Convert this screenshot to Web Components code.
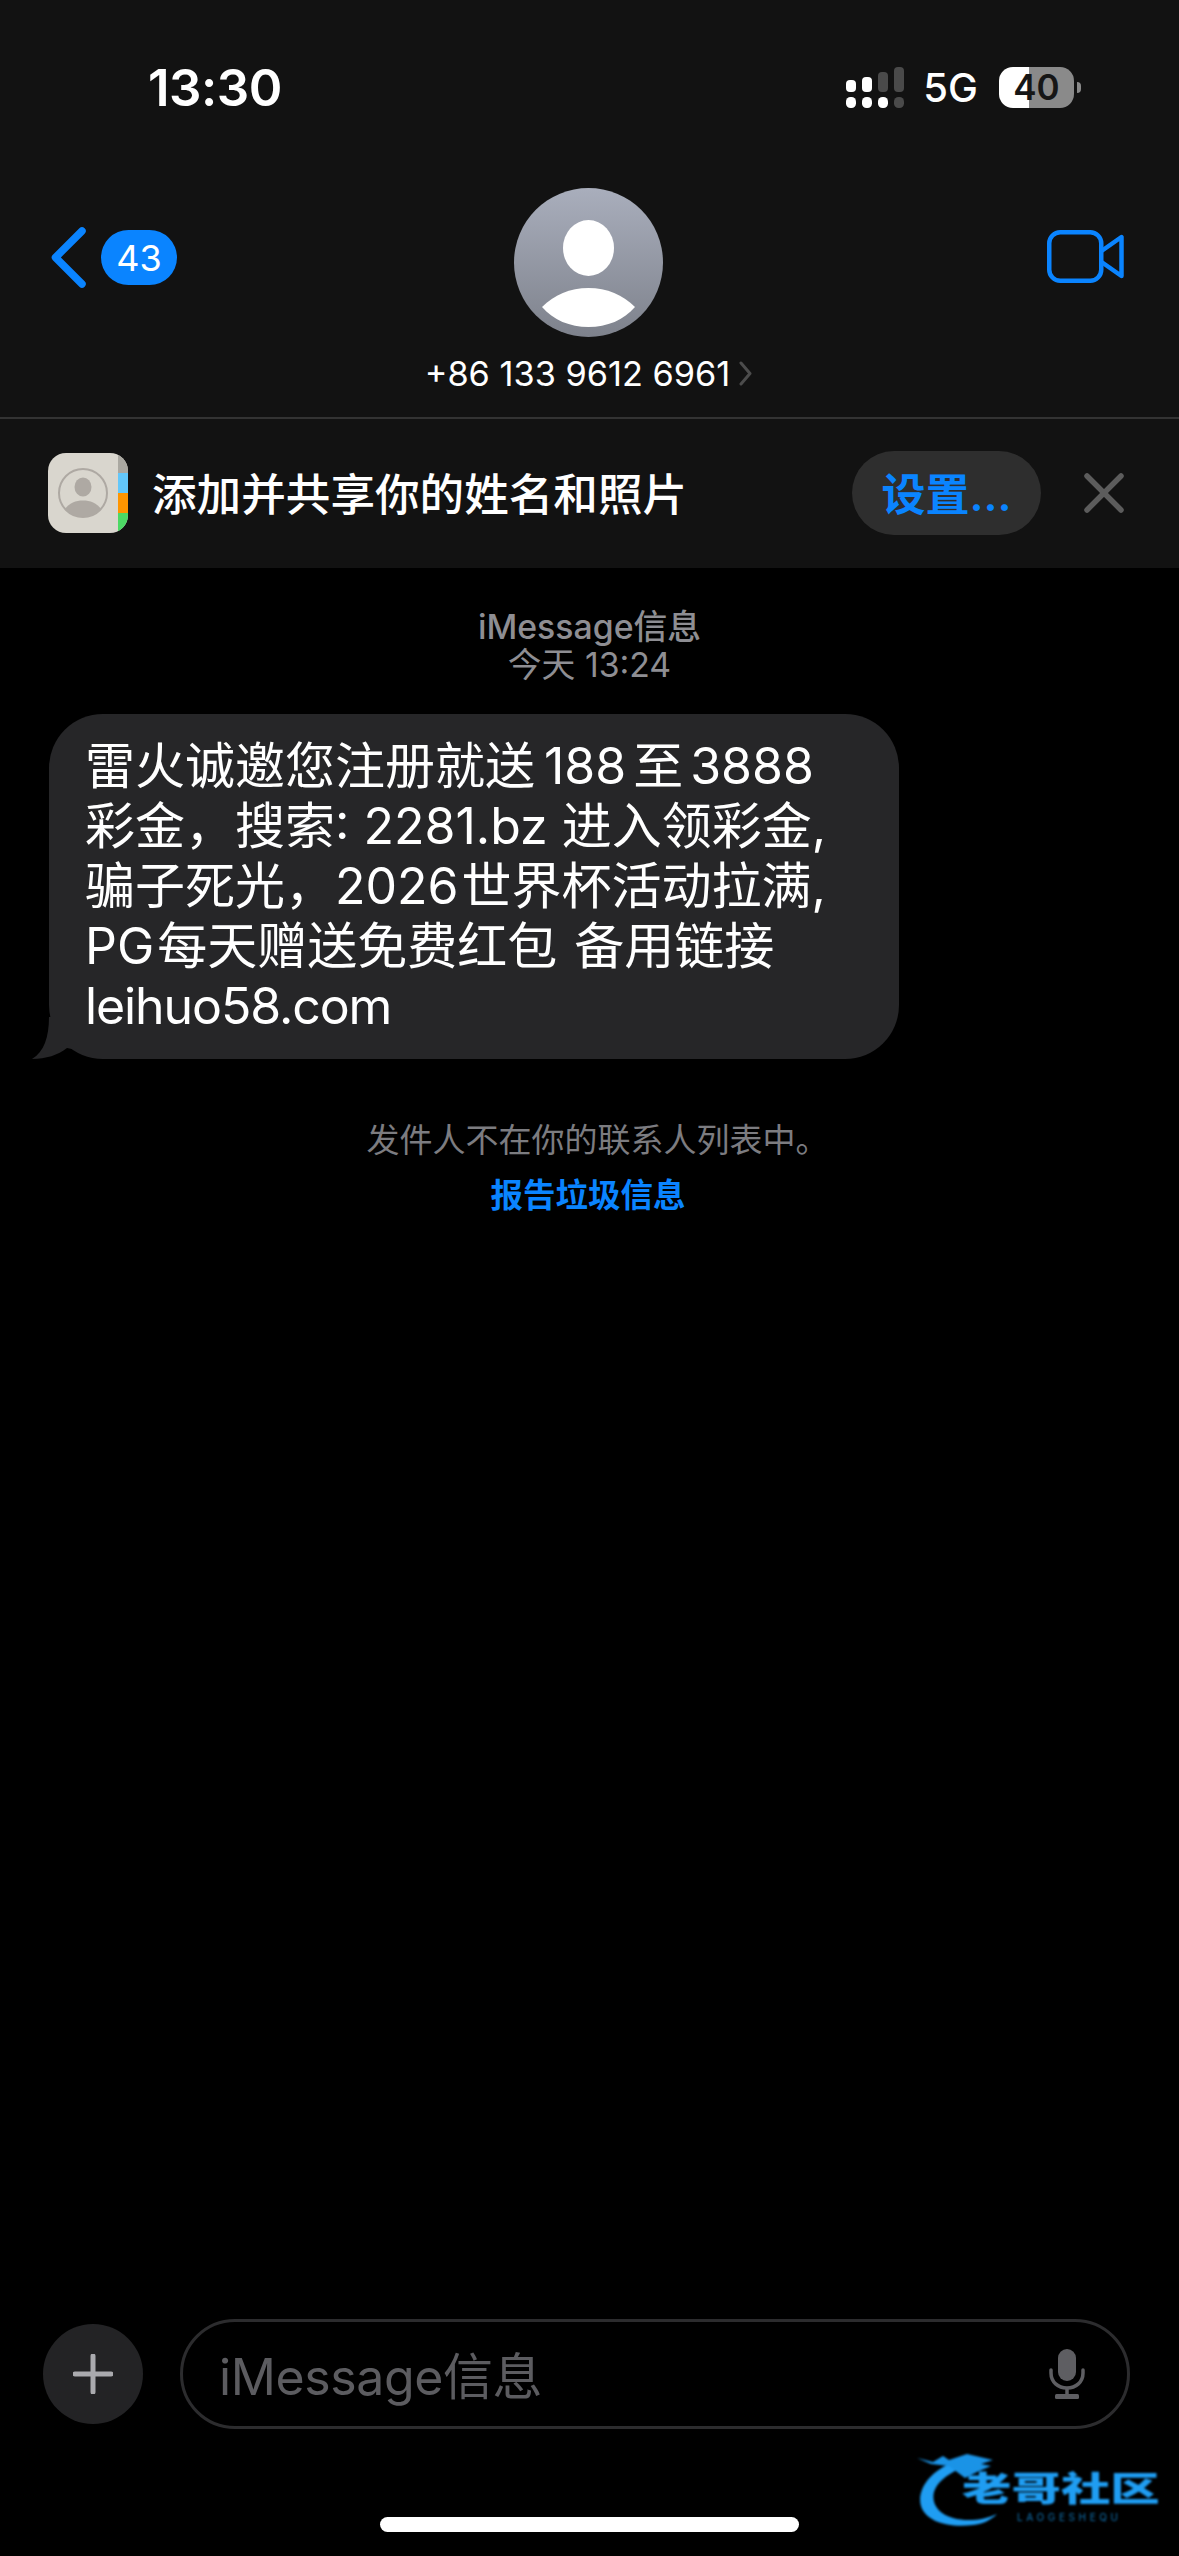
<!DOCTYPE html>
<html lang="zh-CN">
<head>
<meta charset="utf-8">
<title>iMessage</title>
<style>
  html, body { margin: 0; background: #000; }
  body {
    width: 1179px;
    height: 2556px;
    overflow: hidden;
    position: relative;
    display: flex;
    flex-direction: column;
    color: #fff;
    font-family: Inter, "Noto Sans CJK SC", sans-serif;
  }
  msg-thread { flex: 1; }
  msg-bubble i { display: inline-block; width: 7px; }
  msg-bubble i.wide { width: 9px; }
  msg-bubble i.thin { width: 3px; }
  msg-bubble span { letter-spacing: -1.1px; }
</style>
</head>
<body>
  <status-bar time="13:30" network="5G" battery="40"></status-bar>
  <chat-header badge="43" phone="+86 133 9612 6961"></chat-header>
  <share-banner>添加并共享你的姓名和照片</share-banner>
  <msg-thread>
    <msg-bubble slot="bubble">雷火诚邀您注册就送<i class="wide"></i>188<i></i>至<i></i>3888<br>彩金，搜索: 2281.bz 进入领彩金,<br>骗子死光，2026<i class="thin"></i>世界杯活动拉满,<br>PG<i class="thin"></i>每天赠送免费红包<i class="thin"></i> 备用链接<br><span>leihuo58.com</span></msg-bubble>
  </msg-thread>
  <msg-composer placeholder="iMessage信息"></msg-composer>
  <home-bar></home-bar>
  <water-mark></water-mark>

<script>
  class StatusBar extends HTMLElement {
    connectedCallback() {
      const time = this.getAttribute('time');
      const network = this.getAttribute('network');
      const battery = this.getAttribute('battery');
      this.attachShadow({ mode: 'open' }).innerHTML = `
        <style>
          :host { display: flex; align-items: center; height: 174px; padding: 0 98px 0 148px; background: #121212; }
          .time { font-size: 51px; font-weight: 600; letter-spacing: -0.5px; margin-right: auto; }
          .net { font-size: 40px; font-weight: 500; margin: 0 21px 0 19px; }
          svg { display: block; }
          .batt {
            width: 75px; height: 41px; border-radius: 14px;
            background: linear-gradient(90deg, #fff 40%, #8a8a8a 40%);
            color: #161616; font-size: 35px; font-weight: 600;
            display: flex; align-items: center; justify-content: center;
          }
          .nub { width: 4px; height: 11px; margin-left: 3px; background: #8a8a8a; border-radius: 0 6px 6px 0; }
        </style>
        <span class="time">${time}</span>
        <svg width="58" height="41" viewBox="0 0 58 41">
          <g fill="#fff">
            <rect x="0" y="13" width="10" height="12" rx="4"/>
            <rect x="16" y="10" width="10" height="15" rx="4"/>
            <rect x="0" y="30" width="10" height="11" rx="4.5"/>
            <rect x="16" y="30" width="10" height="11" rx="4.5"/>
            <rect x="32" y="30" width="10" height="11" rx="4.5"/>
          </g>
          <g fill="#4a4a4a">
            <rect x="32" y="5" width="10" height="20" rx="4"/>
            <rect x="48" y="0" width="10" height="25" rx="4"/>
            <rect x="48" y="30" width="10" height="11" rx="4.5"/>
          </g>
        </svg>
        <span class="net">${network}</span>
        <span class="batt">${battery}</span>
        <span class="nub"></span>`;
    }
  }

  class ChatHeader extends HTMLElement {
    connectedCallback() {
      const badge = this.getAttribute('badge');
      const phone = this.getAttribute('phone');
      this.attachShadow({ mode: 'open' }).innerHTML = `
        <style>
          :host {
            display: grid; grid-template-columns: 1fr auto 1fr; align-items: start;
            padding: 14px 53px 22px 51px; background: #121212; border-bottom: 2px solid #333;
          }
          .back { display: flex; align-items: center; gap: 15px; margin-top: 39px; }
          .badge {
            width: 76px; height: 55px; border-radius: 28px; background: #0a84ff;
            font-size: 36px; display: flex; align-items: center; justify-content: center;
          }
          .who { display: flex; flex-direction: column; align-items: center; gap: 14px; }
          .name { display: flex; align-items: center; gap: 9px; height: 44px; font-size: 34.300px; }
          .video { justify-self: end; margin: 42px 2px 0 0; }
          svg { display: block; }
        </style>
        <div class="back">
          <svg width="35" height="61" viewBox="0 0 35 61">
            <path d="M31 4 L4.500 30.500 L31 57" fill="none" stroke="#0a84ff" stroke-width="7.500" stroke-linecap="round" stroke-linejoin="round"/>
          </svg>
          <span class="badge">${badge}</span>
        </div>
        <div class="who">
          <svg width="149" height="149" viewBox="0 0 149 149">
            <defs>
              <linearGradient id="av" x1="0" y1="0" x2="0" y2="1">
                <stop offset="0" stop-color="#a9aebc"/>
                <stop offset="1" stop-color="#7e828c"/>
              </linearGradient>
            </defs>
            <circle cx="74.500" cy="74.500" r="74.500" fill="url(#av)"/>
            <ellipse cx="74.500" cy="60" rx="25.500" ry="28" fill="#fff"/>
            <path d="M28 119 C40 107 56 100 74.500 100 C93 100 109 107 121 119 C110 132 93 139 74.500 139 C56 139 39 132 28 119 Z" fill="#fff"/>
          </svg>
          <div class="name">
            <span>${phone}</span>
            <svg width="13" height="25" viewBox="0 0 13 25"><path d="M2 2 L11 12.500 L2 23" fill="none" stroke="#4c4c4c" stroke-width="3" stroke-linecap="round" stroke-linejoin="round"/></svg>
          </div>
        </div>
        <svg class="video" width="77" height="53" viewBox="0 0 77 53">
          <rect x="2.250" y="2.250" width="52" height="48.500" rx="11" fill="none" stroke="#0a84ff" stroke-width="4.500"/>
          <path d="M54.500 21 L74.500 7 V46 L54.500 32" fill="none" stroke="#0a84ff" stroke-width="4.500" stroke-linejoin="round"/>
        </svg>`;
    }
  }

  class ShareBanner extends HTMLElement {
    constructor() {
      super();
      this.attachShadow({ mode: 'open' }).innerHTML = `
        <style>
          :host {
            display: flex; align-items: center; height: 149px; padding: 0 55px 1px 48px;
            background: #121212; box-sizing: border-box;
          }
          svg { display: block; flex: none; }
          .label { font-size: 44.600px; font-weight: 500; margin-left: 24px; margin-right: auto; padding-bottom: 3px; }
          .btn {
            width: 189px; height: 84px; border-radius: 42px; background: #2e2e2e; color: #0a84ff;
            font-size: 44px; font-weight: 600; display: flex; align-items: center; justify-content: center;
          }
          .btn span { padding-bottom: 3px; }
          .close { margin-left: 43px; }
        </style>
        <svg width="80" height="80" viewBox="0 0 80 80">
          <defs><clipPath id="ic"><rect width="80" height="80" rx="18"/></clipPath></defs>
          <g clip-path="url(#ic)">
            <rect width="80" height="80" fill="#d9d6ce"/>
            <rect x="70" width="10" height="20" fill="#aaa8a1"/>
            <rect x="70" y="20" width="10" height="20" fill="#63c7fa"/>
            <rect x="70" y="40" width="10" height="20" fill="#ff9500"/>
            <rect x="70" y="60" width="10" height="20" fill="#4cd964"/>
            <circle cx="35" cy="40" r="24" fill="none" stroke="#aea9a3" stroke-width="2"/>
            <ellipse cx="35" cy="34" rx="8.500" ry="9.500" fill="#aea9a3"/>
            <path d="M17 56 C21 50 28 47.500 35 47.500 C42 47.500 49 50 53 56 C49 61 42 64 35 64 C28 64 21 61 17 56 Z" fill="#aea9a3"/>
          </g>
        </svg>
        <span class="label"><slot></slot></span>
        <span class="btn"><span>设置...</span></span>
        <svg class="close" width="40" height="40" viewBox="0 0 40 40">
          <path d="M3 3 L37 37 M37 3 L3 37" stroke="#5c5c5c" stroke-width="5.500" stroke-linecap="round"/>
        </svg>`;
    }
  }

  class MsgThread extends HTMLElement {
    constructor() {
      super();
      this.attachShadow({ mode: 'open' }).innerHTML = `
        <style>
          :host { display: flex; flex-direction: column; padding-top: 40px; color: #8e8e93; font-size: 33px; line-height: 38px; }
          .meta { text-align: center; margin-bottom: 30px; font-size: 33.800px; }
          .meta div:first-child { font-weight: 500; }
          ::slotted(msg-bubble) { align-self: flex-start; }
          .sys { text-align: center; line-height: 44px; margin-top: 59px; padding-left: 16px; color: #7c7c80; }
          .report { text-align: center; line-height: 44px; margin-top: 12px; padding-right: 3px; color: #0a84ff; font-size: 32.500px; font-weight: 600; }
        </style>
        <div class="meta"><div>iMessage信息</div><div>今天 13:24</div></div>
        <slot name="bubble"></slot>
        <div class="sys">发件人不在你的联系人列表中。</div>
        <div class="report">报告垃圾信息</div>`;
    }
  }

  class MsgBubble extends HTMLElement {
    constructor() {
      super();
      this.attachShadow({ mode: 'open' }).innerHTML = `
        <style>
          :host {
            display: block; position: relative; box-sizing: border-box;
            width: 850px; height: 345px; margin-left: 49px; padding: 22px 20px 23px 36px;
            background: #262628; border-radius: 54px; color: #fff;
            font-size: 50px; line-height: 60px; white-space: nowrap;
          }
          .tail { position: absolute; left: -17px; bottom: 0; display: block; }
        </style>
        <slot></slot>
        <svg class="tail" width="50" height="42" viewBox="0 0 50 42">
          <path d="M17 0 C17 20 12 35 0 42 C14 42 26 38 35 31 L50 34 L50 0 Z" fill="#262628"/>
        </svg>`;
    }
  }

  class MsgComposer extends HTMLElement {
    connectedCallback() {
      const placeholder = this.getAttribute('placeholder');
      this.attachShadow({ mode: 'open' }).innerHTML = `
        <style>
          :host { display: flex; align-items: center; gap: 37px; padding: 0 49px 0 43px; }
          .plus {
            flex: none; width: 100px; height: 100px; border-radius: 50%; background: #232325;
            display: flex; align-items: center; justify-content: center;
          }
          .field {
            flex: 1; box-sizing: border-box; height: 110px; border: 3px solid #2c2c2e; border-radius: 55px;
            display: flex; align-items: center; justify-content: space-between; padding: 0 42px 0 36px;
            color: #5c5c60; font-size: 50px; letter-spacing: -0.4px;
          }
          .field span { padding-bottom: 2px; }
          svg { display: block; }
        </style>
        <span class="plus">
          <svg width="40" height="40" viewBox="0 0 40 40"><path d="M20 2 V38 M2 20 H38" stroke="#aaaaae" stroke-width="5" stroke-linecap="round"/></svg>
        </span>
        <div class="field">
          <span>${placeholder}</span>
          <svg width="36" height="50" viewBox="0 0 36 50">
            <rect x="9" y="0" width="18" height="32" rx="9" fill="#5e5e62"/>
            <path d="M2 21 V24 C2 33 9 39 18 39 C27 39 34 33 34 24 V21" fill="none" stroke="#5e5e62" stroke-width="3.500" stroke-linecap="round"/>
            <path d="M18 39 V46" stroke="#5e5e62" stroke-width="3.500"/>
            <rect x="6" y="45" width="24" height="5" rx="1.500" fill="#5e5e62"/>
          </svg>
        </div>`;
    }
  }

  class HomeBar extends HTMLElement {
    constructor() {
      super();
      this.attachShadow({ mode: 'open' }).innerHTML = `
        <style>
          :host { display: flex; justify-content: center; padding: 88px 0 24px 0; }
          div { width: 419px; height: 15px; border-radius: 8px; background: #fff; }
        </style>
        <div></div>`;
    }
  }

  // site stamp burnt into the screenshot, sits on top of the page corner
  class WaterMark extends HTMLElement {
    constructor() {
      super();
      this.attachShadow({ mode: 'open' }).innerHTML = `
        <style>
          :host { position: absolute; left: 915px; top: 2448px; width: 250px; height: 84px; filter: blur(0.8px); }
          svg { position: absolute; left: 0; top: 0; }
          .cn {
            position: absolute; left: 47px; top: 21px; white-space: nowrap;
            font: 900 48px/48px "Noto Sans CJK SC", sans-serif; color: #1f9df2;
            transform: scale(1.03, 0.72); transform-origin: left top;
          }
          .en {
            position: absolute; left: 102px; top: 64px; white-space: nowrap;
            font: 500 10px/10px Inter, sans-serif; letter-spacing: 3.600px; color: #0e6298;
          }
        </style>
        <svg width="250" height="84" viewBox="0 0 250 84">
          <path d="M34 16 C12 26 2 44 6 58 C11 74 34 80 58 77 C68 76 76 72 82 66 C70 72 52 74 38 70 C24 66 16 56 19 44 C22 34 32 27 42 22 Z" fill="#1f9df2"/>
          <path d="M2 10 L18 14 L28 8 L34 12 L52 6 L78 12 L66 16 L76 18 L62 24 L50 30 L42 24 L34 18 L16 16 Z" fill="#1a93e6"/>
        </svg>
        <span class="cn">老哥社区</span>
        <span class="en">LAOGESHEQU</span>`;
    }
  }

  customElements.define('status-bar', StatusBar);
  customElements.define('chat-header', ChatHeader);
  customElements.define('share-banner', ShareBanner);
  customElements.define('msg-thread', MsgThread);
  customElements.define('msg-bubble', MsgBubble);
  customElements.define('msg-composer', MsgComposer);
  customElements.define('home-bar', HomeBar);
  customElements.define('water-mark', WaterMark);
</script>
</body>
</html>
